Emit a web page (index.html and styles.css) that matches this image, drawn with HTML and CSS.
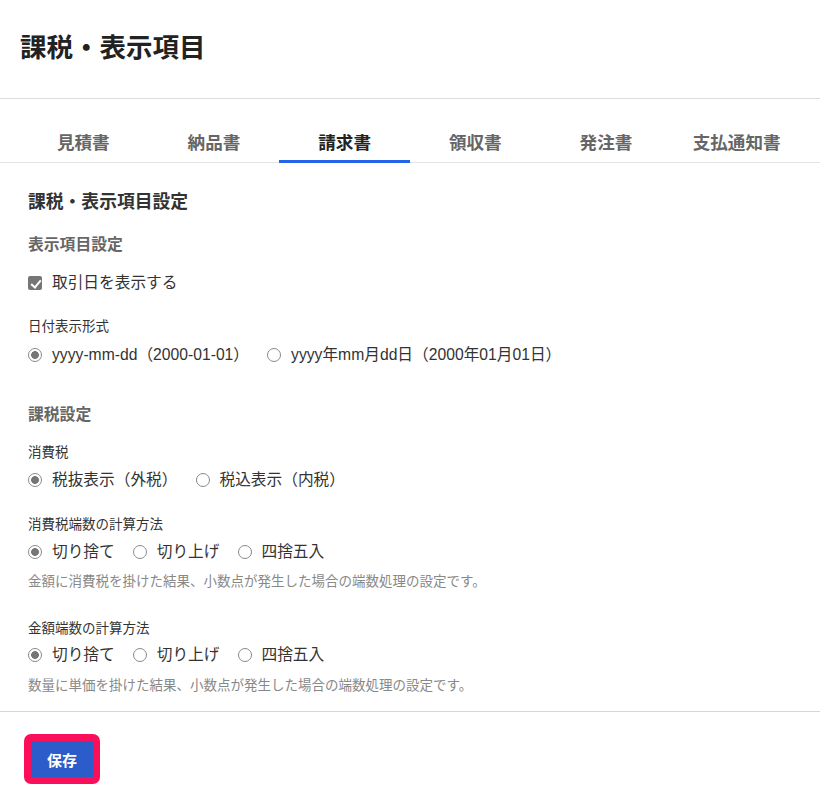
FILE: index.html
```html
<!DOCTYPE html>
<html lang="ja">
<head>
<meta charset="utf-8">
<title>課税・表示項目</title>
<link rel="stylesheet" href="styles.css">
</head>
<body>
<header class="page-header">
  <h1 class="page-title">課税・表示項目</h1>
</header>
<nav class="tabs">
  <div class="tab">見積書</div>
  <div class="tab">納品書</div>
  <div class="tab tab-active">請求書</div>
  <div class="tab">領収書</div>
  <div class="tab">発注書</div>
  <div class="tab">支払通知書</div>
</nav>
<main class="content">
  <h2 class="section-title">課税・表示項目設定</h2>

  <h3 class="group-title">表示項目設定</h3>
  <label class="option check-row"><input type="checkbox" class="check" checked><span>取引日を表示する</span></label>

  <div class="field field-date">
    <div class="field-label">日付表示形式</div>
    <div class="options">
      <label class="option"><input type="radio" name="date" class="radio" checked><span>yyyy-mm-dd（2000-01-01）</span></label>
      <label class="option"><input type="radio" name="date" class="radio"><span>yyyy年mm月dd日（2000年01月01日）</span></label>
    </div>
  </div>

  <h3 class="group-title group-tax">課税設定</h3>

  <div class="field field-first">
    <div class="field-label">消費税</div>
    <div class="options">
      <label class="option"><input type="radio" name="tax" class="radio" checked><span>税抜表示（外税）</span></label>
      <label class="option"><input type="radio" name="tax" class="radio"><span>税込表示（内税）</span></label>
    </div>
  </div>

  <div class="field">
    <div class="field-label">消費税端数の計算方法</div>
    <div class="options">
      <label class="option"><input type="radio" name="round1" class="radio" checked><span>切り捨て</span></label>
      <label class="option"><input type="radio" name="round1" class="radio"><span>切り上げ</span></label>
      <label class="option"><input type="radio" name="round1" class="radio"><span>四捨五入</span></label>
    </div>
    <p class="note">金額に消費税を掛けた結果、小数点が発生した場合の端数処理の設定です。</p>
  </div>

  <div class="field field-amount">
    <div class="field-label">金額端数の計算方法</div>
    <div class="options">
      <label class="option"><input type="radio" name="round2" class="radio" checked><span>切り捨て</span></label>
      <label class="option"><input type="radio" name="round2" class="radio"><span>切り上げ</span></label>
      <label class="option"><input type="radio" name="round2" class="radio"><span>四捨五入</span></label>
    </div>
    <p class="note">数量に単価を掛けた結果、小数点が発生した場合の端数処理の設定です。</p>
  </div>
</main>
<footer class="footer">
  <button class="save-btn" type="button">保存</button>
</footer>
</body>
</html>
```

FILE: styles.css
```css
* { box-sizing: border-box; }
html, body { margin: 0; padding: 0; background: #fff; }
body {
  font-family: "Liberation Sans", "Noto Sans CJK JP", sans-serif;
  color: #333;
  width: 820px;
}
h1, h2, h3, p { margin: 0; }

.page-header {
  padding: 30px 20px 32px;
  border-bottom: 1px solid #dcdcdc;
  height: 99px;
}
.page-title {
  font-size: 26.5px;
  line-height: 36px;
  font-weight: 700;
  color: #222;
}

.tabs {
  display: grid;
  grid-template-columns: repeat(6, 1fr);
  padding: 0 18px;
  border-bottom: 1px solid #e3e3e3;
  height: 64px;
}
.tab {
  text-align: center;
  font-size: 17.6px;
  font-weight: 700;
  color: #666;
  line-height: 24px;
  padding-top: 32px;
  padding-bottom: 5px;
  border-bottom: 3px solid transparent;
  margin-bottom: -1px;
}
.tab-active {
  color: #222;
  border-bottom-color: #2563eb;
}

.content {
  padding: 27px 28px 15px;
  border-bottom: 1px solid #d6d6d6;
}
.section-title {
  font-size: 17.8px;
  line-height: 24px;
  font-weight: 700;
  color: #333;
}
.group-title {
  margin-top: 19px;
  font-size: 15.8px;
  line-height: 24px;
  font-weight: 700;
  color: #666;
}
.group-tax { margin-top: 36px; }

.option {
  display: inline-flex;
  align-items: center;
  font-size: 15.7px;
  line-height: 24px;
  color: #333;
  margin-right: 18px;
}
.check-row { margin-top: 14px; display: flex; }

.options {
  display: flex;
  margin-top: 6px;
}

.check, .radio {
  appearance: none;
  -webkit-appearance: none;
  margin: 0 10px 0 0;
  width: 14px;
  height: 14px;
  flex: none;
}
.check {
  border-radius: 2px;
  background: #767676;
  position: relative;
}
.check::after {
  content: "";
  position: absolute;
  left: 4.5px;
  top: 1.5px;
  width: 4px;
  height: 8px;
  border: solid #fff;
  border-width: 0 2.2px 2.2px 0;
  transform: rotate(40deg);
}
.radio {
  border: 1.3px solid #8a8a8a;
  border-radius: 50%;
  background: #fff;
}
.radio:checked {
  background: radial-gradient(circle, #767676 0 3.6px, #fff 4.1px);
  border-color: #8a8a8a;
}

.field { margin-top: 23px; }
.field-date { margin-top: 22px; }
.field-first { margin-top: 16px; }
.field-amount { margin-top: 27px; }
.field .options { margin-top: 5px; }
.field-date .options { margin-top: 6px; }
.field-amount .options { margin-top: 4px; }

.field-label {
  font-size: 13.5px;
  line-height: 20px;
  color: #333;
}
.note {
  margin-top: 8px;
  font-size: 13.5px;
  line-height: 20px;
  color: #888;
}
.field-amount .note { margin-top: 9px; }

.footer {
  padding: 22px 24px 20px;
}
.save-btn {
  display: block;
  width: 76px;
  height: 50px;
  border: 7px solid #fb0f5b;
  border-radius: 7px;
  background: #2b5cc9;
  color: #fff;
  font-family: "Liberation Sans", "Noto Sans CJK JP", sans-serif;
  font-size: 15px;
  font-weight: 700;
  padding: 0;
  cursor: pointer;
}
```
